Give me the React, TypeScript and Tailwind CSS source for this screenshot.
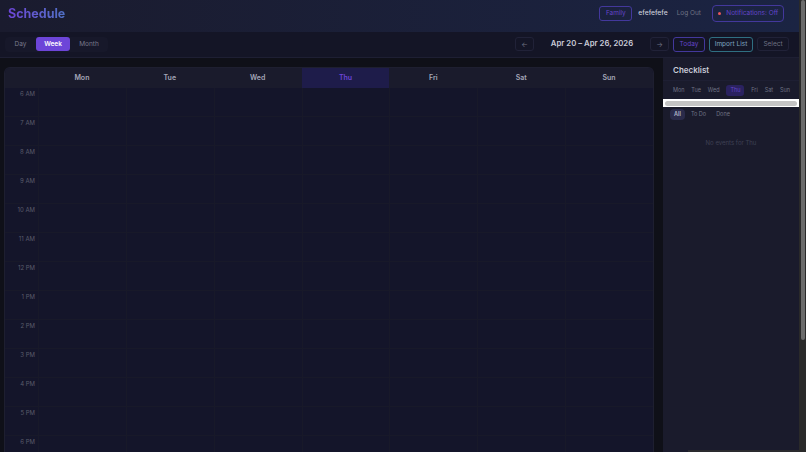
const days = ["Mon", "Tue", "Wed", "Thu", "Fri", "Sat", "Sun"];
const hours = ["6 AM", "7 AM", "8 AM", "9 AM", "10 AM", "11 AM", "12 PM", "1 PM", "2 PM", "3 PM", "4 PM", "5 PM", "6 PM"];

function Header() {
  return (
    <header className="flex h-[32px] shrink-0 items-center justify-between bg-gradient-to-r from-[#1a1b2e] to-[#1b2443] pl-[8px] pr-[15px]">
      <h1 className="bg-gradient-to-r from-[#6d45d8] to-[#4f6fc4] bg-clip-text pb-[3px] text-[12.5px] font-bold text-transparent">Schedule</h1>
      <div className="flex items-center pb-[5px]">
        <button className="h-[15px] w-[33px] rounded-[3px] border border-[#43389c] text-[6.5px] leading-none text-[#6344c8]">Family</button>
        <span className="ml-[6px] text-[6.75px] font-medium leading-none text-[#c9cbd8]">efefefefe</span>
        <button className="ml-[9px] text-[6.5px] leading-none text-[#6f7284]">Log Out</button>
        <button className="ml-[11px] flex h-[17px] w-[72px] items-center justify-center gap-[5px] rounded-[4px] border border-[#43389c] text-[6.5px] leading-none text-[#6344c8]">
          <span className="size-[3.5px] rounded-full bg-[#e8575a]" />
          Notifications: Off
        </button>
      </div>
    </header>
  );
}

function Toolbar() {
  return (
    <div className="flex h-[26px] shrink-0 items-center justify-between border-b border-[#1e1f33] bg-[#141526] pb-[1px] pl-[5px] pr-[10px]">
      <div className="flex h-[15px] items-center rounded-[4px] bg-[#17182a] text-[6.5px] leading-none">
        <span className="w-[31px] text-center text-[#77798a]">Day</span>
        <span className="flex h-[14px] w-[34px] items-center justify-center rounded-[3px] bg-[#6d45d8] font-semibold text-white">Week</span>
        <span className="w-[38px] text-center text-[#77798a]">Month</span>
      </div>
      <div className="flex items-center">
        <button className="flex h-[14px] w-[19px] items-center justify-center rounded-[3px] border border-[#212238] text-[7px] leading-none text-[#6f7284]">←</button>
        <span className="w-[116px] text-center text-[7.75px] font-semibold leading-none text-[#c9cbd8]">Apr 20 – Apr 26, 2026</span>
        <button className="flex h-[14px] w-[19px] items-center justify-center rounded-[3px] border border-[#212238] text-[7px] leading-none text-[#6f7284]">→</button>
        <button className="ml-[4px] h-[15px] w-[32px] rounded-[3px] border border-[#43389c] text-[6.5px] leading-none text-[#6344c8]">Today</button>
        <button className="ml-[4px] h-[15px] w-[44px] rounded-[3px] border border-[#2f6f82] text-[6.5px] leading-none text-[#7fa6c0]">Import List</button>
        <button className="ml-[4px] h-[14px] w-[32px] rounded-[3px] border border-[#212238] text-[6.5px] leading-none text-[#6f7284]">Select</button>
      </div>
    </div>
  );
}

function Calendar() {
  return (
    <section className="ml-[4px] mt-[9px] flex w-[650px] shrink-0 flex-col overflow-hidden rounded-t-[6px] border-l border-r border-t border-[#1e1f30] bg-[#14152a]">
      <div className="grid h-[20px] shrink-0 grid-cols-[33px_repeat(7,1fr)] bg-[#1a1b2c]">
        <div />
        {days.map((day) => (
          <div
            key={day}
            className={
              day === "Thu"
                ? "flex items-center justify-center bg-[#1e1c4a] text-[7px] font-semibold text-[#6d45d8]"
                : "flex items-center justify-center text-[7px] font-semibold text-[#a5a7b8]"
            }
          >
            {day}
          </div>
        ))}
      </div>
      {hours.map((hour) => (
        <div key={hour} className="grid h-[29px] shrink-0 grid-cols-[33px_repeat(7,1fr)] border-b border-[#181929]">
          <div className="pr-[3px] pt-[2px] text-right text-[6px] leading-[8px] text-[#5a5c6a]">{hour}</div>
          {days.map((day) => (
            <div key={day} className="border-l border-[#181929]" />
          ))}
        </div>
      ))}
    </section>
  );
}

function Checklist() {
  return (
    <aside className="relative ml-[9px] flex w-[136px] shrink-0 flex-col bg-[#1a1b2c]">
      <h2 className="flex h-[22px] items-center pl-[10px] pt-[2px] text-[8px] font-semibold leading-none text-[#c9cbd8]">Checklist</h2>
      <div className="flex h-[18px] items-center justify-between border-t border-[#1e1f33] pl-[10px] pr-[9px] pt-[2px] text-[5.5px] leading-none text-[#6f7284]">
        {days.map((day) => (
          <span
            key={day}
            className={day === "Thu" ? "rounded-[3px] bg-[#2a2260] px-[4px] py-[2.5px] text-[#6344c8]" : ""}
          >
            {day}
          </span>
        ))}
      </div>
      <div className="mt-[1px] h-[8px] bg-white px-[2px] py-[1.5px]">
        <div className="h-full rounded-full bg-[#c4c4c4]" />
      </div>
      <div className="mt-[2px] flex items-center gap-[6px] pl-[7px] text-[5.5px] leading-none text-[#6f7284]">
        <span className="rounded-[4px] bg-[#2a2b4a] px-[4px] py-[2.5px] font-semibold text-[#b5b7c8]">All</span>
        <span>To Do</span>
        <span className="ml-[4px]">Done</span>
      </div>
      <p className="mt-[20px] text-center text-[6px] leading-none text-[#3f4154]">No events for Thu</p>
      <div className="absolute bottom-0 left-[25px] right-0 h-[2px] bg-[#2a2a2e]" />
    </aside>
  );
}

export default function App() {
  return (
    <div className="flex h-screen w-screen overflow-hidden bg-[#0f1018] font-['Inter',sans-serif]">
      <div className="flex min-w-0 flex-1 flex-col overflow-hidden">
        <Header />
        <Toolbar />
        <main className="flex min-h-0 flex-1">
          <Calendar />
          <Checklist />
        </main>
      </div>
      <div className="w-[7px] shrink-0 bg-[#2a2a2a] pl-[2px] pr-[1px]">
        <div className="h-[340px] rounded-full bg-[#6b6b6b]" />
      </div>
    </div>
  );
}
